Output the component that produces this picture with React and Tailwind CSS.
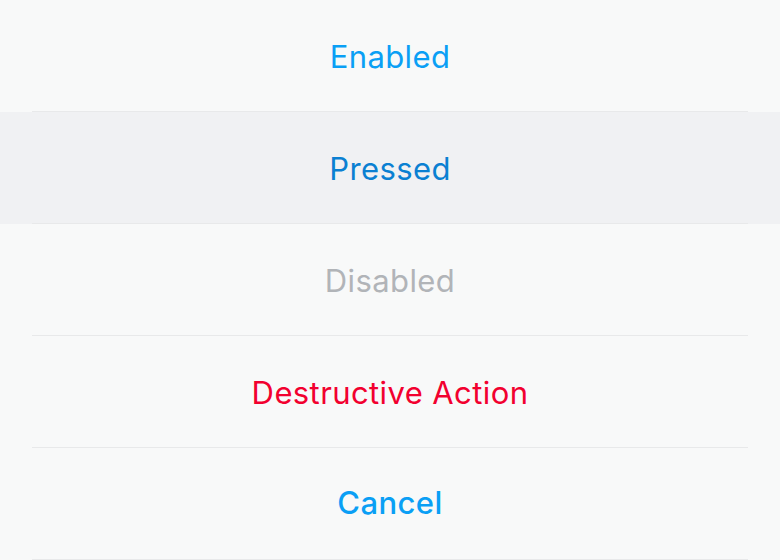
const rows = [
  { label: "Enabled", text: "text-[#0a9ff5]", bg: "", weight: "font-normal pt-[3px]" },
  { label: "Pressed", text: "text-[#0a80d2]", bg: "bg-[#f0f1f3]", weight: "font-normal pt-[3px]" },
  { label: "Disabled", text: "text-[#b1b4b8]", bg: "", weight: "font-normal pt-[3px]" },
  { label: "Destructive Action", text: "text-[#f2002f]", bg: "", weight: "font-normal pt-[3px]" },
  { label: "Cancel", text: "text-[#0a9ff5]", bg: "", weight: "font-medium" },
];

const App = () => {
  return (
    <div className="w-[780px] h-[560px] bg-[#f8f9f9] font-['Inter',sans-serif] overflow-hidden">
      {rows.map((row, i) => (
        <div key={i} className={`h-[112px] flex flex-col ${row.bg}`}>
          <div className={`flex-1 flex items-center justify-center text-[31px] tracking-[0.4px] ${row.text} ${row.weight}`}>
            {row.label}
          </div>
          <div className="h-px mx-8 bg-[#e8e9ea]" />
        </div>
      ))}
    </div>
  );
};

export default App;
